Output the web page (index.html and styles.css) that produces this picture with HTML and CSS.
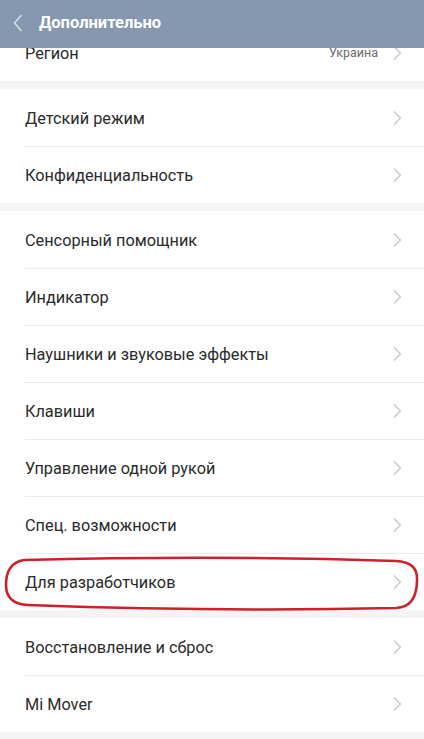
FILE: index.html
```html
<!DOCTYPE html>
<html lang="ru">
<head>
<meta charset="utf-8">
<link rel="stylesheet" href="styles.css">
</head>
<body>
<div class="screen">
  <header class="topbar">
    <svg class="back" width="10" height="18" viewBox="0 0 10 18"><path d="M8.5 1 L1.5 9 L8.5 17" fill="none" stroke="#dfe5ec" stroke-width="1.3"/></svg>
    <span class="title">Дополнительно</span>
  </header>
  <main class="list">
    <section class="group">
      <div class="row"><span class="label">Регион</span><span class="value">Украина</span><svg class="chev" width="9" height="16" viewBox="0 0 9 16"><path d="M1 1.5 L7.5 8 L1 14.5" fill="none" stroke="#c4c4c4" stroke-width="1.2"/></svg></div>
    </section>
    <section class="group">
      <div class="row"><span class="label">Детский режим</span><svg class="chev" width="9" height="16" viewBox="0 0 9 16"><path d="M1 1.5 L7.5 8 L1 14.5" fill="none" stroke="#c4c4c4" stroke-width="1.2"/></svg></div>
      <div class="row"><span class="label">Конфиденциальность</span><svg class="chev" width="9" height="16" viewBox="0 0 9 16"><path d="M1 1.5 L7.5 8 L1 14.5" fill="none" stroke="#c4c4c4" stroke-width="1.2"/></svg></div>
    </section>
    <section class="group">
      <div class="row"><span class="label">Сенсорный помощник</span><svg class="chev" width="9" height="16" viewBox="0 0 9 16"><path d="M1 1.5 L7.5 8 L1 14.5" fill="none" stroke="#c4c4c4" stroke-width="1.2"/></svg></div>
      <div class="row"><span class="label">Индикатор</span><svg class="chev" width="9" height="16" viewBox="0 0 9 16"><path d="M1 1.5 L7.5 8 L1 14.5" fill="none" stroke="#c4c4c4" stroke-width="1.2"/></svg></div>
      <div class="row"><span class="label">Наушники и звуковые эффекты</span><svg class="chev" width="9" height="16" viewBox="0 0 9 16"><path d="M1 1.5 L7.5 8 L1 14.5" fill="none" stroke="#c4c4c4" stroke-width="1.2"/></svg></div>
      <div class="row"><span class="label">Клавиши</span><svg class="chev" width="9" height="16" viewBox="0 0 9 16"><path d="M1 1.5 L7.5 8 L1 14.5" fill="none" stroke="#c4c4c4" stroke-width="1.2"/></svg></div>
      <div class="row"><span class="label">Управление одной рукой</span><svg class="chev" width="9" height="16" viewBox="0 0 9 16"><path d="M1 1.5 L7.5 8 L1 14.5" fill="none" stroke="#c4c4c4" stroke-width="1.2"/></svg></div>
      <div class="row"><span class="label">Спец. возможности</span><svg class="chev" width="9" height="16" viewBox="0 0 9 16"><path d="M1 1.5 L7.5 8 L1 14.5" fill="none" stroke="#c4c4c4" stroke-width="1.2"/></svg></div>
      <div class="row"><span class="label">Для разработчиков</span><svg class="chev" width="9" height="16" viewBox="0 0 9 16"><path d="M1 1.5 L7.5 8 L1 14.5" fill="none" stroke="#c4c4c4" stroke-width="1.2"/></svg></div>
    </section>
    <section class="group">
      <div class="row"><span class="label">Восстановление и сброс</span><svg class="chev" width="9" height="16" viewBox="0 0 9 16"><path d="M1 1.5 L7.5 8 L1 14.5" fill="none" stroke="#c4c4c4" stroke-width="1.2"/></svg></div>
      <div class="row"><span class="label">Mi Mover</span><svg class="chev" width="9" height="16" viewBox="0 0 9 16"><path d="M1 1.5 L7.5 8 L1 14.5" fill="none" stroke="#c4c4c4" stroke-width="1.2"/></svg></div>
    </section>
  </main>
  <svg class="mark" width="424" height="739" viewBox="0 0 424 739"><path d="M24 560 Q 220 555 396 561 Q 418 562 417 580 Q 417 607 396 608 Q 220 612 28 605 Q 6 604 6 585 Q 6 563 24 560 Z" fill="none" stroke="#cf1f2b" stroke-width="2.6"/></svg>
</div>
</body>
</html>
```

FILE: styles.css
```css
html, body {
  margin: 0;
  padding: 0;
  background: #f4f4f4;
}
.screen {
  position: relative;
  width: 424px;
  height: 739px;
  overflow: hidden;
  font-family: Roboto, "Noto Sans", sans-serif;
  background: #f4f4f4;
}
.topbar {
  position: absolute;
  left: 0;
  top: 0;
  right: 0;
  height: 48px;
  background: #8598af;
  display: flex;
  align-items: center;
  z-index: 2;
}
.back {
  margin-left: 13px;
  margin-top: -2px;
}
.title {
  margin-left: 16px;
  margin-top: -3px;
  color: #ffffff;
  font-size: 16.5px;
  font-weight: 700;
}
.list {
  padding-top: 24px;
  display: flex;
  flex-direction: column;
  gap: 8px;
}
.group {
  background: #ffffff;
  display: flex;
  flex-direction: column;
}
.row {
  height: 56px;
  margin-left: 25px;
  padding-right: 22px;
  display: flex;
  align-items: center;
  border-top: 1px solid #ebebeb;
}
.row:first-child {
  border-top-color: transparent;
}
.label {
  flex: 1;
  font-size: 16.3px;
  color: #2a2a2a;
}
.value {
  font-size: 12.5px;
  color: #6b6b6b;
  margin-right: 15px;
  margin-top: -2px;
}
.chev {
  display: block;
}
.mark {
  position: absolute;
  left: 0;
  top: 0;
  pointer-events: none;
  z-index: 3;
}
```
